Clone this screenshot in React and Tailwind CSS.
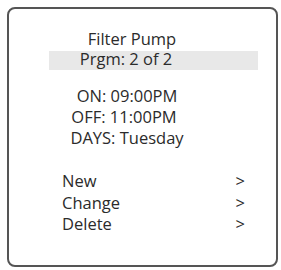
import React from 'react';

const MenuRow = ({ label }) => (
  <div className="flex justify-between w-[183px] leading-[21.5px]">
    <span>{label}</span>
    <span>&gt;</span>
  </div>
);

export default function App() {
  return (
    <div className="w-[281px] h-[270px] bg-white pt-[7px] pl-[7px] text-[#2b2b2b] text-[16.5px] font-['Open_Sans',sans-serif]">
      <div className="w-[271px] h-[260px] border-2 border-[#555] rounded-[8px] pt-[19px]">
        <div className="w-[236px] pl-[10px] text-center leading-[21px]">Filter Pump</div>
        <div className="ml-[40px] mt-[2px] w-[209px] h-[19px] bg-[#e8e8e8] leading-[16px]">
          <div className="w-[154px] text-center">Prgm: 2 of 2</div>
        </div>
        <div className="mt-[15px] w-[236px] text-center leading-[21px]">
          <div>ON: 09:00PM</div>
          <div className="pr-[6px]">OFF: 11:00PM</div>
          <div>DAYS: Tuesday</div>
        </div>
        <div className="mt-[22px] pl-[53px]">
          <MenuRow label="New" />
          <MenuRow label="Change" />
          <MenuRow label="Delete" />
        </div>
      </div>
    </div>
  );
}
